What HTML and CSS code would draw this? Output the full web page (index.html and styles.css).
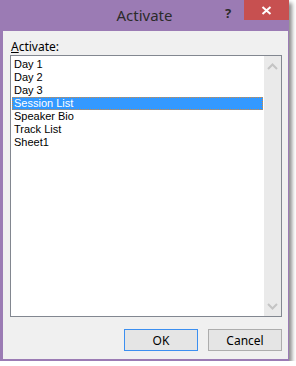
FILE: index.html
```html
<!DOCTYPE html>
<html lang="en">
<head>
    <meta charset="UTF-8">
    <title>Activate</title>
    <link rel="stylesheet" href="styles.css">
</head>
<body>
    <div class="window">
        <div class="titlebar">
            <span class="title">Activate</span>
            <span class="help">?</span>
            <span class="close">
                <svg width="11" height="9" viewBox="0 0 11 9"><path d="M1.5 1 L9.5 8 M9.5 1 L1.5 8" stroke="#fff" stroke-width="2"/></svg>
            </span>
        </div>
        <div class="panel">
            <label class="caption"><u>A</u>ctivate:</label>
            <div class="listbox">
                <ul class="items">
                    <li>Day 1</li>
                    <li>Day 2</li>
                    <li>Day 3</li>
                    <li class="selected">Session List</li>
                    <li>Speaker Bio</li>
                    <li>Track List</li>
                    <li>Sheet1</li>
                </ul>
                <div class="scrollbar">
                    <svg width="11" height="7" viewBox="0 0 11 7"><path d="M1 6 L5.5 1.5 L10 6" fill="none" stroke="#c4c4c4" stroke-width="2"/></svg>
                    <svg width="11" height="7" viewBox="0 0 11 7"><path d="M1 1 L5.5 5.5 L10 1" fill="none" stroke="#c4c4c4" stroke-width="2"/></svg>
                </div>
            </div>
            <div class="buttons">
                <button class="default">OK</button>
                <button>Cancel</button>
            </div>
        </div>
    </div>
</body>
</html>
```

FILE: styles.css
```css
body {
    margin: 0;
    background-color: #fff;
    font-family: "Noto Sans", sans-serif;
    color: #000;
}
.window {
    width: 289px;
    height: 361px;
    background-color: #9b7bb4;
    box-shadow: 3px 3px 4px rgba(0, 0, 0, 0.45);
    display: flex;
    flex-direction: column;
}
.titlebar {
    height: 31px;
    position: relative;
    display: flex;
    justify-content: center;
    align-items: center;
}
.title {
    font-size: 15px;
    color: #2b2b2b;
    margin-top: -1px;
}
.help {
    position: absolute;
    left: 225px;
    top: 4px;
    font-size: 13px;
    font-weight: bold;
    color: #2b2b2b;
}
.close {
    position: absolute;
    left: 244px;
    top: 0;
    width: 45px;
    height: 20px;
    background-color: #c75050;
    display: flex;
    justify-content: center;
    align-items: center;
}
.panel {
    margin: 0 1px 2px 3px;
    flex: 1;
    background-color: #f0f0f0;
    display: flex;
    flex-direction: column;
    padding: 0 6px 0 7px;
}
.caption {
    font-size: 12px;
    margin-top: 7px;
    height: 17px;
    line-height: 17px;
    padding-left: 1px;
}
.listbox {
    height: 260px;
    border: 1px solid #828790;
    background-color: #fff;
    display: flex;
}
.items {
    list-style: none;
    margin: 0;
    padding: 2px 0 0 1px;
    flex: 1;
    font-family: "Liberation Sans", sans-serif;
    font-size: 11px;
}
.items li {
    height: 13px;
    line-height: 13px;
    padding-left: 2px;
    margin-right: 1px;
}
.items li.selected {
    background-color: #3399ff;
    color: #fff;
    outline: 1px dotted #d68a3c;
    outline-offset: -1px;
}
.scrollbar {
    width: 17px;
    background-color: #eaeaea;
    display: flex;
    flex-direction: column;
    justify-content: space-between;
    align-items: center;
    padding: 7px 0 6px;
}
.buttons {
    display: flex;
    justify-content: flex-end;
    gap: 10px;
    margin-top: 12px;
}
button {
    width: 74px;
    height: 22px;
    font-family: "Noto Sans", sans-serif;
    font-size: 12px;
    background-color: #e5e5e5;
    border: 1px solid #adadad;
    padding: 0;
    color: #000;
}
button.default {
    border-color: #3c8ff0;
}
```
